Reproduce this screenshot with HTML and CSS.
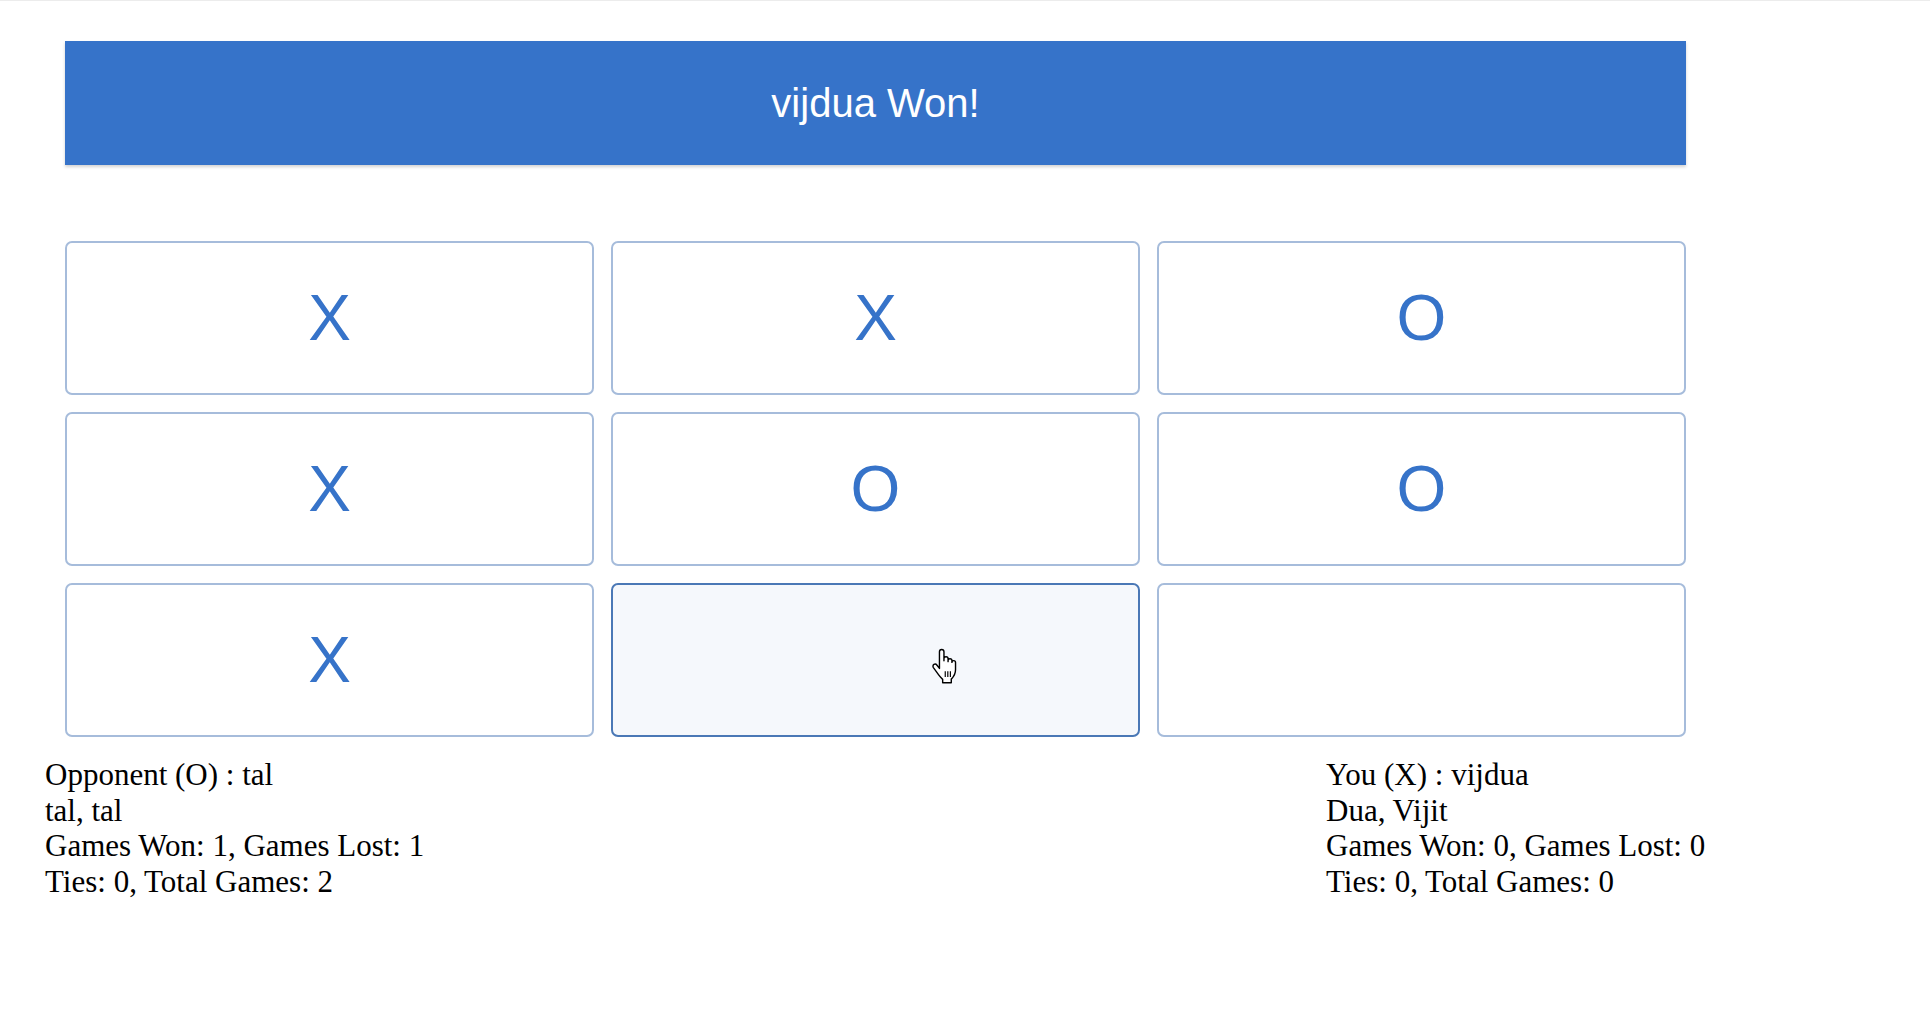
FILE: index.html
```html
<!DOCTYPE html>
<html lang="en">
<head>
<meta charset="utf-8">
<title>Tic Tac Toe</title>
<link rel="stylesheet" href="styles.css">
</head>
<body>
<div class="page">
  <div class="banner">vijdua Won!</div>
  <div class="board">
    <div class="cell">X</div>
    <div class="cell">X</div>
    <div class="cell">O</div>
    <div class="cell">X</div>
    <div class="cell">O</div>
    <div class="cell">O</div>
    <div class="cell">X</div>
    <div class="cell cell-hover">
      <svg class="cursor" width="31" height="36" viewBox="0 0 24 28" aria-hidden="true">
        <path d="M9 1.2c1 0 1.8.8 1.8 1.8V10V8.4c0-.9.7-1.6 1.6-1.6s1.6.7 1.6 1.6v2.2V9.8c0-.8.7-1.5 1.5-1.5s1.5.7 1.5 1.5v1.4c0-.8.6-1.4 1.4-1.4s1.4.6 1.4 1.4V17c0 3.4-1.6 5.6-3.3 7.2V27H9.8v-2.6C8.2 23 6.4 20.6 5 18.6l-2.4-3.4c-.6-.9-.4-1.9.4-2.4.8-.5 1.8-.2 2.4.6l1.9 2.5V3c0-1 .8-1.8 1.7-1.8z" fill="#fff" stroke="#000" stroke-width="1.1" stroke-linejoin="round"/>
        <path d="M11.8 18v4.6M13.8 18v4.6M15.8 18v4.6" stroke="#000" stroke-width="0.9"/>
      </svg>
    </div>
    <div class="cell"></div>
  </div>
  <div class="players">
    <div class="player">
      <div>Opponent (O) : tal</div>
      <div>tal, tal</div>
      <div>Games Won: 1, Games Lost: 1</div>
      <div>Ties: 0, Total Games: 2</div>
    </div>
    <div class="player player-you">
      <div>You (X) : vijdua</div>
      <div>Dua, Vijit</div>
      <div>Games Won: 0, Games Lost: 0</div>
      <div>Ties: 0, Total Games: 0</div>
    </div>
  </div>
</div>
</body>
</html>
```
FILE: styles.css
```css
html, body {
  margin: 0;
  padding: 0;
  background: #ffffff;
}

body {
  border-top: 1px solid #ececec;
  font-family: "Liberation Serif", "Times New Roman", serif;
}

.page {
  padding-top: 40px;
}

.banner {
  margin-left: 65px;
  width: 1621px;
  height: 124px;
  background: #3673c9;
  box-shadow: 0 2px 3px rgba(0, 0, 0, 0.18);
  color: #ffffff;
  font-family: "Liberation Sans", Arial, sans-serif;
  font-size: 40px;
  display: flex;
  align-items: center;
  justify-content: center;
}

.board {
  margin-top: 76px;
  margin-left: 65px;
  width: 1621px;
  display: grid;
  grid-template-columns: repeat(3, 1fr);
  grid-auto-rows: 154px;
  gap: 17px;
}

.cell {
  position: relative;
  box-sizing: border-box;
  border: 2px solid #a6bcdb;
  border-radius: 7px;
  background: #ffffff;
  color: #3673c9;
  font-family: "Liberation Sans", Arial, sans-serif;
  font-size: 64px;
  display: flex;
  align-items: center;
  justify-content: center;
}

.cell-hover {
  background: #f5f8fc;
  border-color: #4a78b6;
}

.cursor {
  position: absolute;
  left: 317px;
  top: 63px;
}

.players {
  display: flex;
  padding-left: 45px;
  margin-top: 20px;
  font-size: 31px;
  line-height: 35.6px;
  color: #000000;
}

.player-you {
  margin-left: auto;
  width: 604px;
}
```
